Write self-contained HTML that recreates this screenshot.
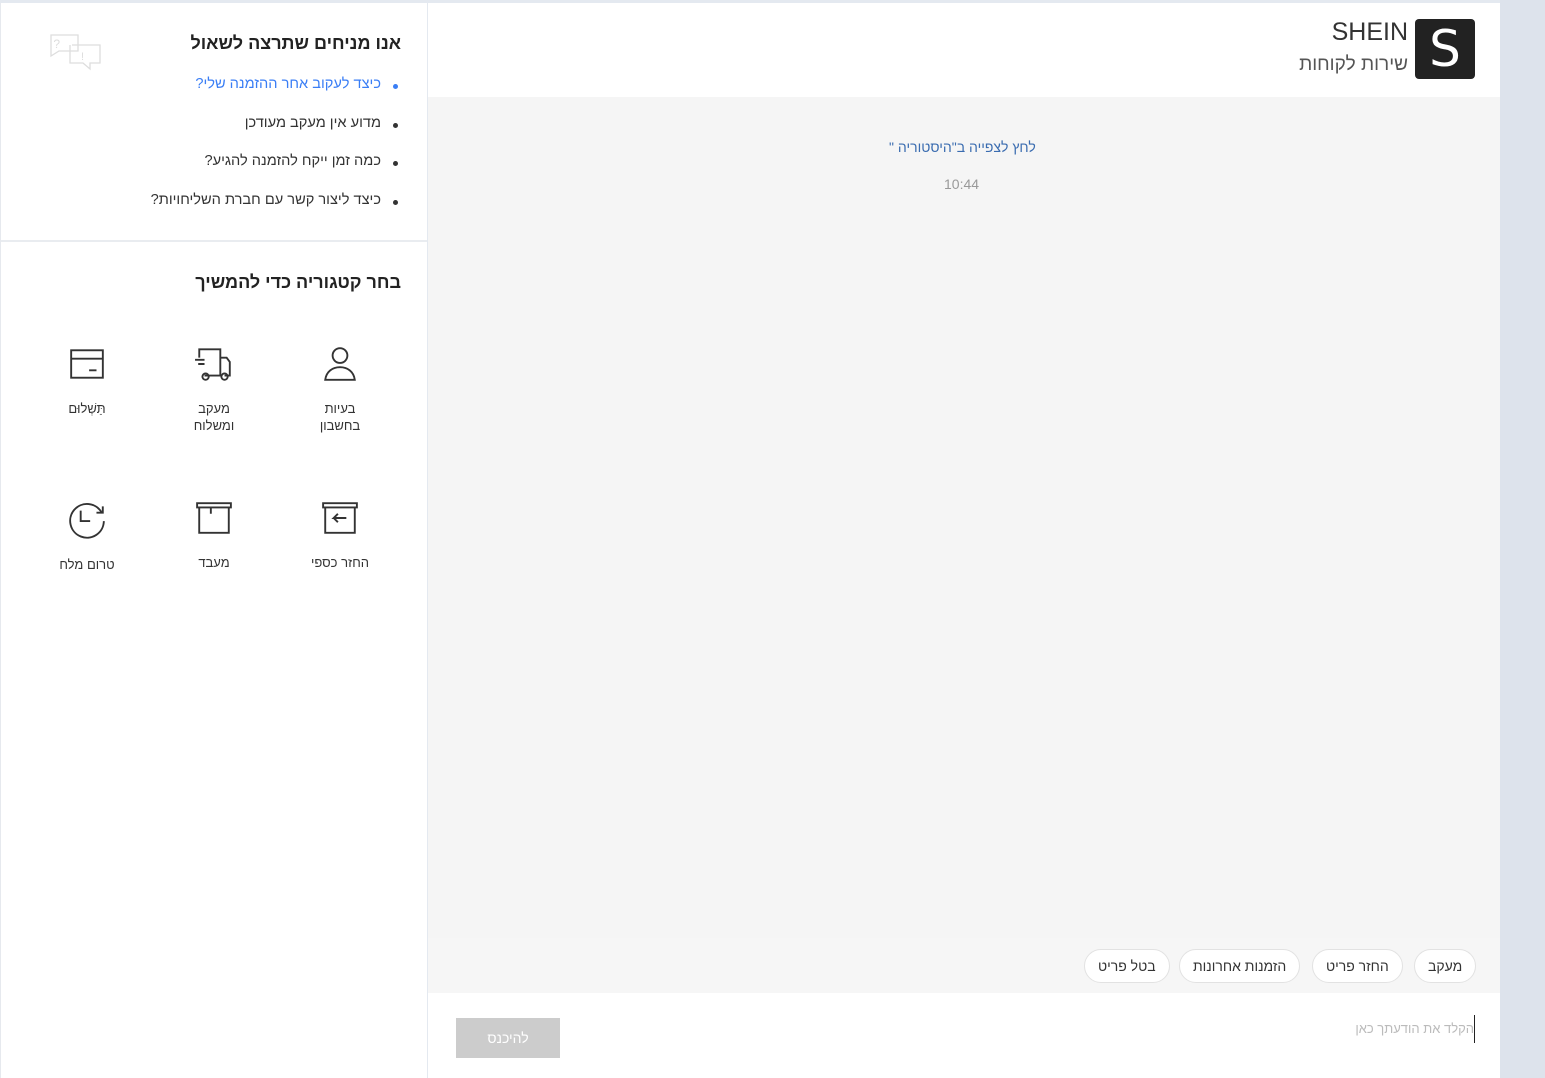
<!DOCTYPE html>
<html dir="rtl"><head><meta charset="utf-8"><style>
*{margin:0;padding:0;box-sizing:border-box}
body{width:1545px;height:1078px;background:#e4e9f0;font-family:"Liberation Sans","Noto Sans CJK SC",sans-serif;position:relative;overflow:hidden;color:#222}
.a{position:absolute}
#left{left:0;top:3px;width:427px;height:1075px;background:#fff;border-left:1px solid #e6e9ee}
#main{left:428px;top:3px;width:1072px;height:1075px;background:#f5f5f5}
#rightbar{left:1500px;top:0;width:45px;height:1078px;background:#dde3ec}
h3{font-size:18px;font-weight:bold;color:#222}
.li{font-size:14.6px;color:#333;right:46px;white-space:nowrap}
.li::before{content:"";position:absolute;right:-17px;top:8px;width:5px;height:5px;border-radius:50%;background:#333}
.blue{color:#3a7ef5}.blue::before{background:#3a7ef5}
.cat{width:90px;text-align:center;font-size:13px;color:#333;line-height:17px}
.cat svg{display:block;margin:0 auto 17px}
.chip{top:949px;height:34px;border:1px solid #e2e2e2;border-radius:17px;background:#fff;font-size:14px;line-height:32px;padding:0 13px;color:#333;white-space:nowrap}
</style></head><body>
<div class="a" id="rightbar"></div>
<div class="a" id="left">
  <svg class="a" style="left:49px;top:30px" width="52" height="38" viewBox="0 0 52 38" fill="none" stroke="#ddd" stroke-width="1.3"><path d="M1 2h27v16H9l-8 5z"/><path d="M22 12h28v18H40v6l-7-6H20V12"/><text x="10" y="15" font-size="12" fill="#ddd" stroke="none">?</text><text x="34" y="27" font-size="11" fill="#ddd" stroke="none">!</text></svg>
  <h3 class="a" style="right:26px;top:30px">אנו מניחים שתרצה לשאול</h3>
  <div class="a li blue" style="top:73px">כיצד לעקוב אחר ההזמנה שלי?</div>
  <div class="a li" style="top:112px">מדוע אין מעקב מעודכן</div>
  <div class="a li" style="top:150px">כמה זמן ייקח להזמנה להגיע?</div>
  <div class="a li" style="top:189px">כיצד ליצור קשר עם חברת השליחויות?</div>
  <div class="a" style="left:0;top:237px;width:426px;height:2px;background:#e9ecf0"></div>
  <h3 class="a" style="right:26px;top:269px">בחר קטגוריה כדי להמשיך</h3>
  <div class="a cat" style="left:294px;top:342px"><svg width="36" height="38" viewBox="0 0 34 36" fill="none" stroke="#333" stroke-width="1.8"><circle cx="17" cy="10" r="7"/><path d="M3 33c1-8 7-12 14-12s13 4 14 12z"/></svg>בעיות<br>בחשבון</div>
  <div class="a cat" style="left:168px;top:342px"><svg width="40" height="38" viewBox="0 0 38 36" fill="none" stroke="#333" stroke-width="1.8"><path d="M5 12V4h20v25H10M25 12h6l3 4v13h-5"/><path d="M1 14h9M4 18h6"/><circle cx="11" cy="30" r="3"/><circle cx="29" cy="30" r="3"/></svg>מעקב<br>ומשלוח</div>
  <div class="a cat" style="left:41px;top:342px"><svg width="38" height="38" viewBox="0 0 36 36" fill="none" stroke="#333" stroke-width="1.8"><rect x="3" y="5" width="30" height="26"/><path d="M3 13h30M20 24h7"/></svg>תַּשְׁלוּם</div>
  <div class="a cat" style="left:294px;top:496px"><svg width="38" height="38" viewBox="0 0 36 36" fill="none" stroke="#333" stroke-width="1.8"><path d="M2 4h32v4H2zM4 8v24h28V8"/><path d="M24 18h-12l4-4M12 18l4 4"/></svg>החזר כספי</div>
  <div class="a cat" style="left:168px;top:496px"><svg width="38" height="38" viewBox="0 0 36 36" fill="none" stroke="#333" stroke-width="1.8"><path d="M2 4h32v4H2zM4 8v24h28V8M15 8v6"/></svg>מעבד</div>
  <div class="a cat" style="left:41px;top:496px"><svg width="40" height="40" viewBox="0 0 38 38" fill="none" stroke="#333" stroke-width="1.8"><path d="M33 13A16 16 0 1 0 35 21"/><path d="M28 13h6V7"/><path d="M13 11v10h9"/></svg>טרום מלח</div>
</div>
<div class="a" id="main">
  <div class="a" style="left:0;top:0;width:1072px;height:94px;background:#fff"></div>
  <div class="a" style="left:987px;top:16px;width:60px;height:60px;background:#222;border-radius:4px;color:#fff;font-size:50px;line-height:60px;text-align:center;font-family:'DejaVu Sans',sans-serif">S</div>
  <div class="a" style="right:92px;top:15px;font-size:25px;color:#333;font-family:'Liberation Sans',sans-serif">SHEIN</div>
  <div class="a" style="right:92px;top:51px;font-size:19px;color:#555">שירות לקוחות</div>
  <div class="a" style="left:461px;top:136px;font-size:14px;color:#3a6cb0">לחץ לצפייה ב"היסטוריה "</div>
  <div class="a" style="left:516px;top:173px;font-size:14px;color:#999;direction:ltr">10:44</div>
  <div class="a" style="left:0;top:935px;width:1072px;height:55px;background:#f6f6f6"></div>
  <div class="a" style="left:0;top:990px;width:1072px;height:85px;background:#fff"></div>
  <div class="a" style="right:26px;top:1018px;font-size:13px;color:#bbb">הקלד את הודעתך כאן</div>
  <div class="a" style="right:25px;top:1012px;width:1px;height:28px;background:#222"></div>
  <div class="a" style="left:28px;top:1015px;width:104px;height:40px;background:#ccc;color:#fff;font-size:14px;line-height:40px;text-align:center">להיכנס</div>
</div>
<div class="a chip" style="left:1414px">מעקב</div>
<div class="a chip" style="left:1312px">החזר פריט</div>
<div class="a chip" style="left:1179px">הזמנות אחרונות</div>
<div class="a chip" style="left:1084px">בטל פריט</div>
</body></html>
